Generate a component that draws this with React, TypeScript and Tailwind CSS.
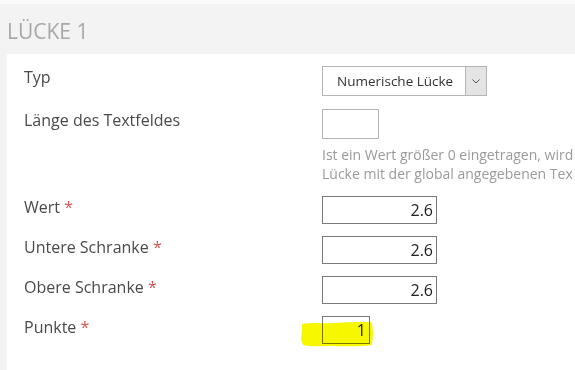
import React from 'react';

const font = { fontFamily: '"Open Sans", "Noto Sans", sans-serif' };

const Req: React.FC = () => <span className="text-[#d9534f]"> *</span>;

const Row: React.FC<{ label: React.ReactNode; children: React.ReactNode; className?: string }> = ({ label, children, className }) => (
  <div className={`flex ${className ?? ''}`}>
    <div className="w-[298px] shrink-0 text-[16px] leading-[22px] text-[#4a4a4a]">{label}</div>
    <div className="relative flex-1">{children}</div>
  </div>
);

export default function App() {
  return (
    <div className="w-[575px] h-[370px] overflow-hidden bg-[#f3f3f4]" style={font}>
      <div className="h-[4px] bg-[#fafafa]" />
      <div className="h-[50px] pl-[7px] pt-[13px] text-[21px] leading-[28px] text-[#a8a8a8]">LÜCKE 1</div>
      <div className="ml-[7px] h-[316px] bg-white pl-[17px] pt-[12px]">
        <Row label="Typ">
          <div className="flex h-[30px] w-[165px] border border-[#b5b5b5] bg-white">
            <div className="flex-1 pl-[14px] text-[13.5px] leading-[28px] text-[#333]">Numerische Lücke</div>
            <div className="flex w-[21px] items-center justify-center border-l border-[#b5b5b5] bg-[#e4e4e4]">
              <svg width="8" height="5" viewBox="0 0 8 5" fill="none" stroke="#555" strokeWidth="1">
                <path d="M0.5 0.5 L4 4 L7.5 0.5" />
              </svg>
            </div>
          </div>
        </Row>
        <Row label="Länge des Textfeldes" className="mt-[13px]">
          <div className="h-[30px] w-[57px] border border-[#b5b5b5] bg-white" />
          <div className="mt-[6px] whitespace-nowrap text-[14px] leading-[19px] text-[#9a9a9a]">
            Ist ein Wert größer 0 eingetragen, wird
            <br />
            Lücke mit der global angegebenen Tex
          </div>
        </Row>
        <Row label={<>Wert<Req /></>} className="mt-[13px]">
          <div className="h-[28px] w-[115px] border border-[#7a7a7a] bg-white pr-[3px] text-right text-[16px] leading-[26px] text-[#222]">2.6</div>
        </Row>
        <Row label={<>Untere Schranke<Req /></>} className="mt-[12px]">
          <div className="h-[28px] w-[115px] border border-[#7a7a7a] bg-white pr-[3px] text-right text-[16px] leading-[26px] text-[#222]">2.6</div>
        </Row>
        <Row label={<>Obere Schranke<Req /></>} className="mt-[12px]">
          <div className="h-[28px] w-[115px] border border-[#7a7a7a] bg-white pr-[3px] text-right text-[16px] leading-[26px] text-[#222]">2.6</div>
        </Row>
        <Row label={<>Punkte<Req /></>} className="mt-[12px]">
          <div className="h-[28px] w-[48px] border border-[#7a7a7a] bg-white pr-[3px] text-right text-[16px] leading-[26px] text-[#222]">1</div>
          <svg className="pointer-events-none absolute left-[-22px] top-[5px] mix-blend-multiply" width="76" height="27" viewBox="0 0 76 27">
            <path d="M2 3 C12 1 22 3 34 2 C46 1 60 1 70 1 L72 2 L73 12 L72 24 C60 26 46 25 32 25 C20 25 10 26 3 24 L1 18 L2 10 Z" fill="#f7f700" />
          </svg>
        </Row>
      </div>
    </div>
  );
}
